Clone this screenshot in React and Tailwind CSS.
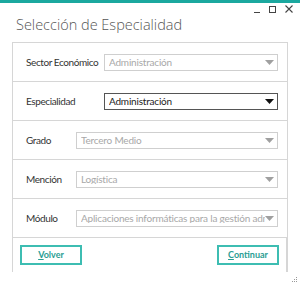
import React from 'react';

const rows = [
    { label: 'Sector Económico', value: 'Administración', left: 'w-[78px]', active: false },
    { label: 'Especialidad', value: 'Administración', left: 'w-[78px]', active: true },
    { label: 'Grado', value: 'Tercero Medio', left: 'w-[50px]', active: false },
    { label: 'Mención', value: 'Logística', left: 'w-[50px]', active: false },
    { label: 'Módulo', value: 'Aplicaciones informáticas para la gestión administrativa', left: 'w-[50px]', active: false },
];

const Caret = ({ active }) => (
    <svg width="9" height="5" viewBox="0 0 9 5" className="shrink-0">
        <path d="M0 0 L9 0 L4.5 5 Z" fill={active ? '#111111' : '#a0a0a0'} />
    </svg>
);

const App = () => {
    return (
        <div className="relative w-[300px] h-[285px] bg-white overflow-hidden font-['Lato','Open_Sans',sans-serif]">
            <div className="h-[3px] bg-[#1ba89f]" />

            {/* Window controls */}
            <div className="absolute top-[5px] right-[7px] flex items-center gap-[9px] text-[#444]">
                <div className="w-[6px] h-[1px] bg-[#444] mt-[6px]" />
                <div className="w-[7px] h-[7px] border border-[#444]" />
                <svg width="8" height="8" viewBox="0 0 8 8">
                    <path d="M0.5 0.5 L7.5 7.5 M7.5 0.5 L0.5 7.5" stroke="#444" strokeWidth="1.1" />
                </svg>
            </div>

            <h1 className="pl-[16px] pt-[12px] h-[39px] font-['Open_Sans',sans-serif] text-[14.5px] font-light text-[#555] leading-[20px]">Selección de Especialidad</h1>

            {/* Form panel */}
            <div className="ml-[12px] w-[276px] border border-b-0 border-[#d6d6d6]">
                {rows.map((row) => (
                    <div key={row.label} className="h-[39px] flex items-center pl-[13px] pr-[9px] border-b border-[#d6d6d6]">
                        <div className={`${row.left} shrink-0 whitespace-nowrap text-[10px] tracking-[-0.4px] text-[#333]`}>{row.label}</div>
                        <div className={`flex-1 min-w-0 h-[17px] flex items-center pl-[4px] pr-[3px] border ${row.active ? 'border-[#555]' : 'border-[#cfcfcf]'}`}>
                            <span className={`flex-1 min-w-0 overflow-hidden whitespace-nowrap text-[10px] tracking-[-0.2px] leading-none ${row.active ? 'text-[#222]' : 'text-[#a8a8a8]'}`}>{row.value}</span>
                            <Caret active={row.active} />
                        </div>
                    </div>
                ))}
                <div className="h-[34px] flex items-start justify-between px-[7px] pt-[7px] border-r border-[#d6d6d6]">
                    <button className="w-[62px] h-[20px] border-2 border-[#3dbdb2] text-[9px] font-bold text-[#2a9d93]">
                        <span className="underline">V</span>olver
                    </button>
                    <button className="w-[62px] h-[20px] border-2 border-[#3dbdb2] text-[9px] font-bold text-[#2a9d93]">
                        <span className="underline">C</span>ontinuar
                    </button>
                </div>
            </div>

            {/* Resize grip */}
            <svg className="absolute right-[2px] bottom-[2px]" width="6" height="6" viewBox="0 0 6 6">
                <rect x="4" y="0" width="1" height="1" fill="#999" />
                <rect x="2" y="2" width="1" height="1" fill="#999" />
                <rect x="4" y="2" width="1" height="1" fill="#999" />
                <rect x="0" y="4" width="1" height="1" fill="#999" />
                <rect x="2" y="4" width="1" height="1" fill="#999" />
                <rect x="4" y="4" width="1" height="1" fill="#999" />
            </svg>
        </div>
    );
};

export default App;
